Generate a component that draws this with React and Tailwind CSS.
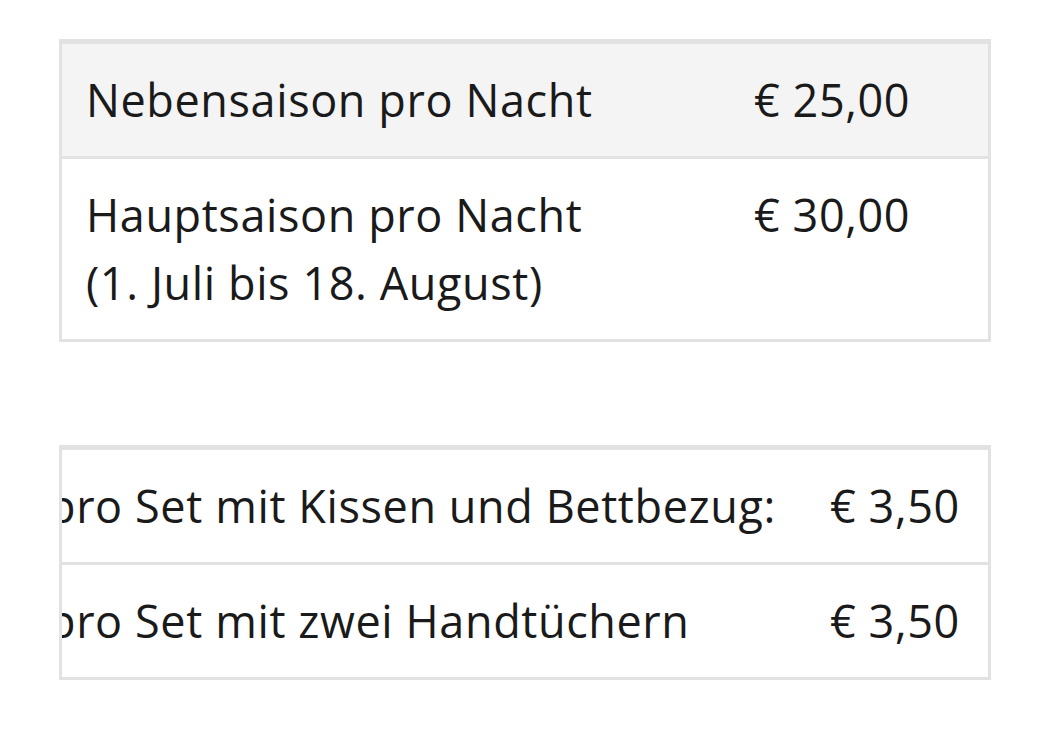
export default function App() {
    const cell = "px-6 py-[22px] align-top";
    return (
        <div className="min-h-screen bg-white pt-[39px] text-[#1a1a1a]"
             style={{fontFamily: "'Open Sans', 'Noto Sans', sans-serif"}}>
            <div className="mx-[59px] w-[932px]">
                <div className="border-x-[3px] border-t-[5px] border-b-[3px] border-[#e2e2e2]">
                    <table className="w-full border-collapse text-[45px] leading-[68px] tracking-[0.6px]">
                        <tbody>
                        <tr className="bg-[#f4f4f4] border-b-[3px] border-[#e2e2e2]">
                            <td className={cell + " w-[668px]"}>Nebensaison pro Nacht</td>
                            <td className={cell}>€ 25,00</td>
                        </tr>
                        <tr>
                            <td className={cell}>Hauptsaison pro Nacht<br/>(1. Juli bis 18. August)</td>
                            <td className={cell}>€ 30,00</td>
                        </tr>
                        </tbody>
                    </table>
                </div>

                <div className="mt-[103px] border-x-[3px] border-t-[5px] border-b-[3px] border-[#e2e2e2] overflow-hidden">
                    <table className="ml-[-38px] w-[967px] border-collapse text-[45px] leading-[68px] tracking-[0.6px]">
                        <tbody>
                        <tr className="border-b-[3px] border-[#e2e2e2]">
                            <td className={cell + " w-[782px] whitespace-nowrap"}>pro Set mit Kissen und Bettbezug:</td>
                            <td className={cell + " whitespace-nowrap"}>€ 3,50</td>
                        </tr>
                        <tr>
                            <td className={cell + " whitespace-nowrap"}>pro Set mit zwei Handtüchern</td>
                            <td className={cell + " whitespace-nowrap"}>€ 3,50</td>
                        </tr>
                        </tbody>
                    </table>
                </div>
            </div>
        </div>
    );
}
